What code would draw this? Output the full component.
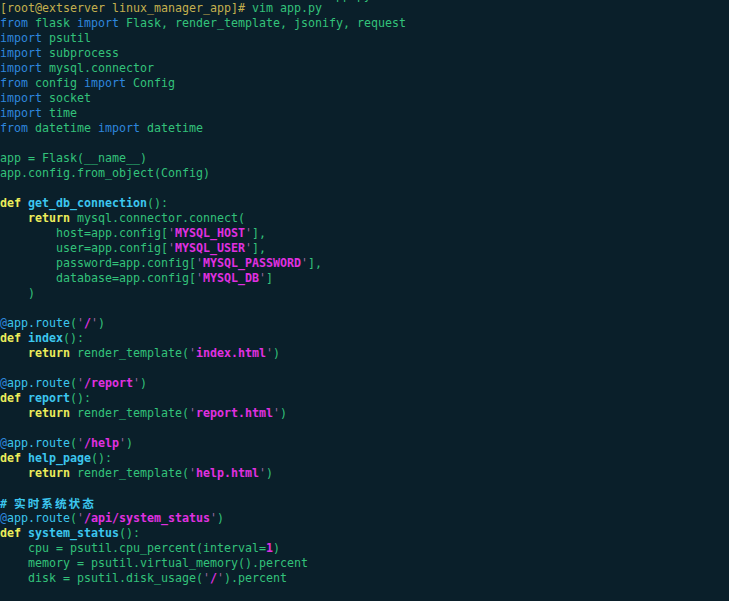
import React from "react";

type Seg = [string, string?];

const G = "text-[#33c27a]";
const B = "text-[#2e86dd]";
const Y = "text-[#ecec5a] font-bold";
const C = "text-[#3cc6ee] font-bold";
const CR = "text-[#3cc6ee]";
const M = "text-[#e030e0] font-bold";
const Q = "text-[#9a6aa0]";
const P = "text-[#c4b04e]";

const str = (s: string): Seg[] => [["'", Q], [s, M], ["'", Q]];

const lines: Seg[][] = [
  [["[root@extserver linux_manager_app]#", P], [" vim app.py", G]],
  [["from", B], [" flask ", G], ["import", B], [" Flask, render_template, jsonify, request", G]],
  [["import", B], [" psutil", G]],
  [["import", B], [" subprocess", G]],
  [["import", B], [" mysql.connector", G]],
  [["from", B], [" config ", G], ["import", B], [" Config", G]],
  [["import", B], [" socket", G]],
  [["import", B], [" time", G]],
  [["from", B], [" datetime ", G], ["import", B], [" datetime", G]],
  [],
  [["app = Flask(__name__)", G]],
  [["app.config.from_object(Config)", G]],
  [],
  [["def", Y], [" "], ["get_db_connection", C], ["():", G]],
  [["    "], ["return", Y], [" mysql.connector.connect(", G]],
  [["        host=app.config[", G], ...str("MYSQL_HOST"), ["],", G]],
  [["        user=app.config[", G], ...str("MYSQL_USER"), ["],", G]],
  [["        password=app.config[", G], ...str("MYSQL_PASSWORD"), ["],", G]],
  [["        database=app.config[", G], ...str("MYSQL_DB"), ["]", G]],
  [["    )", G]],
  [],
  [["@", B], ["app.route", CR], ["(", G], ...str("/"), [")", G]],
  [["def", Y], [" "], ["index", C], ["():", G]],
  [["    "], ["return", Y], [" render_template(", G], ...str("index.html"), [")", G]],
  [],
  [["@", B], ["app.route", CR], ["(", G], ...str("/report"), [")", G]],
  [["def", Y], [" "], ["report", C], ["():", G]],
  [["    "], ["return", Y], [" render_template(", G], ...str("report.html"), [")", G]],
  [],
  [["@", B], ["app.route", CR], ["(", G], ...str("/help"), [")", G]],
  [["def", Y], [" "], ["help_page", C], ["():", G]],
  [["    "], ["return", Y], [" render_template(", G], ...str("help.html"), [")", G]],
  [],
  [["# ", C], ["实时系统状态", C + " cjk"]],
  [["@", B], ["app.route", CR], ["(", G], ...str("/api/system_status"), [")", G]],
  [["def", Y], [" "], ["system_status", C], ["():", G]],
  [["    cpu = psutil.cpu_percent(interval=", G], ["1", M], [")", G]],
  [["    memory = psutil.virtual_memory().percent", G]],
  [["    disk = psutil.disk_usage(", G], ...str("/"), [").percent", G]],
];

export default function App() {
  return (
    <div
      className="w-[729px] h-[601px] overflow-hidden bg-[#0a1f2a] text-[11.63px] leading-[15px] whitespace-pre"
      style={{ fontFamily: '"DejaVu Sans Mono", "Noto Sans CJK SC", monospace' }}
    >
      <div className="-mt-[14px] h-[15px] pt-[2px]">
        <span className={G}>{"                                               app.py"}</span>
      </div>
      {lines.map((segs, i) => (
        <div key={i} className="h-[15px]">
          {segs.length === 0
            ? " "
            : segs.map(([t, c], j) =>
                c && c.includes("cjk") ? (
                  <span
                    key={j}
                    className={c.replace(" cjk", "") + " inline-block w-[84px] tracking-[2px]"}
                    style={{ fontFamily: '"Noto Sans CJK SC", sans-serif' }}
                  >
                    {t}
                  </span>
                ) : (
                  <span key={j} className={c ?? G}>
                    {t}
                  </span>
                )
            )}
        </div>
      ))}
    </div>
  );
}
